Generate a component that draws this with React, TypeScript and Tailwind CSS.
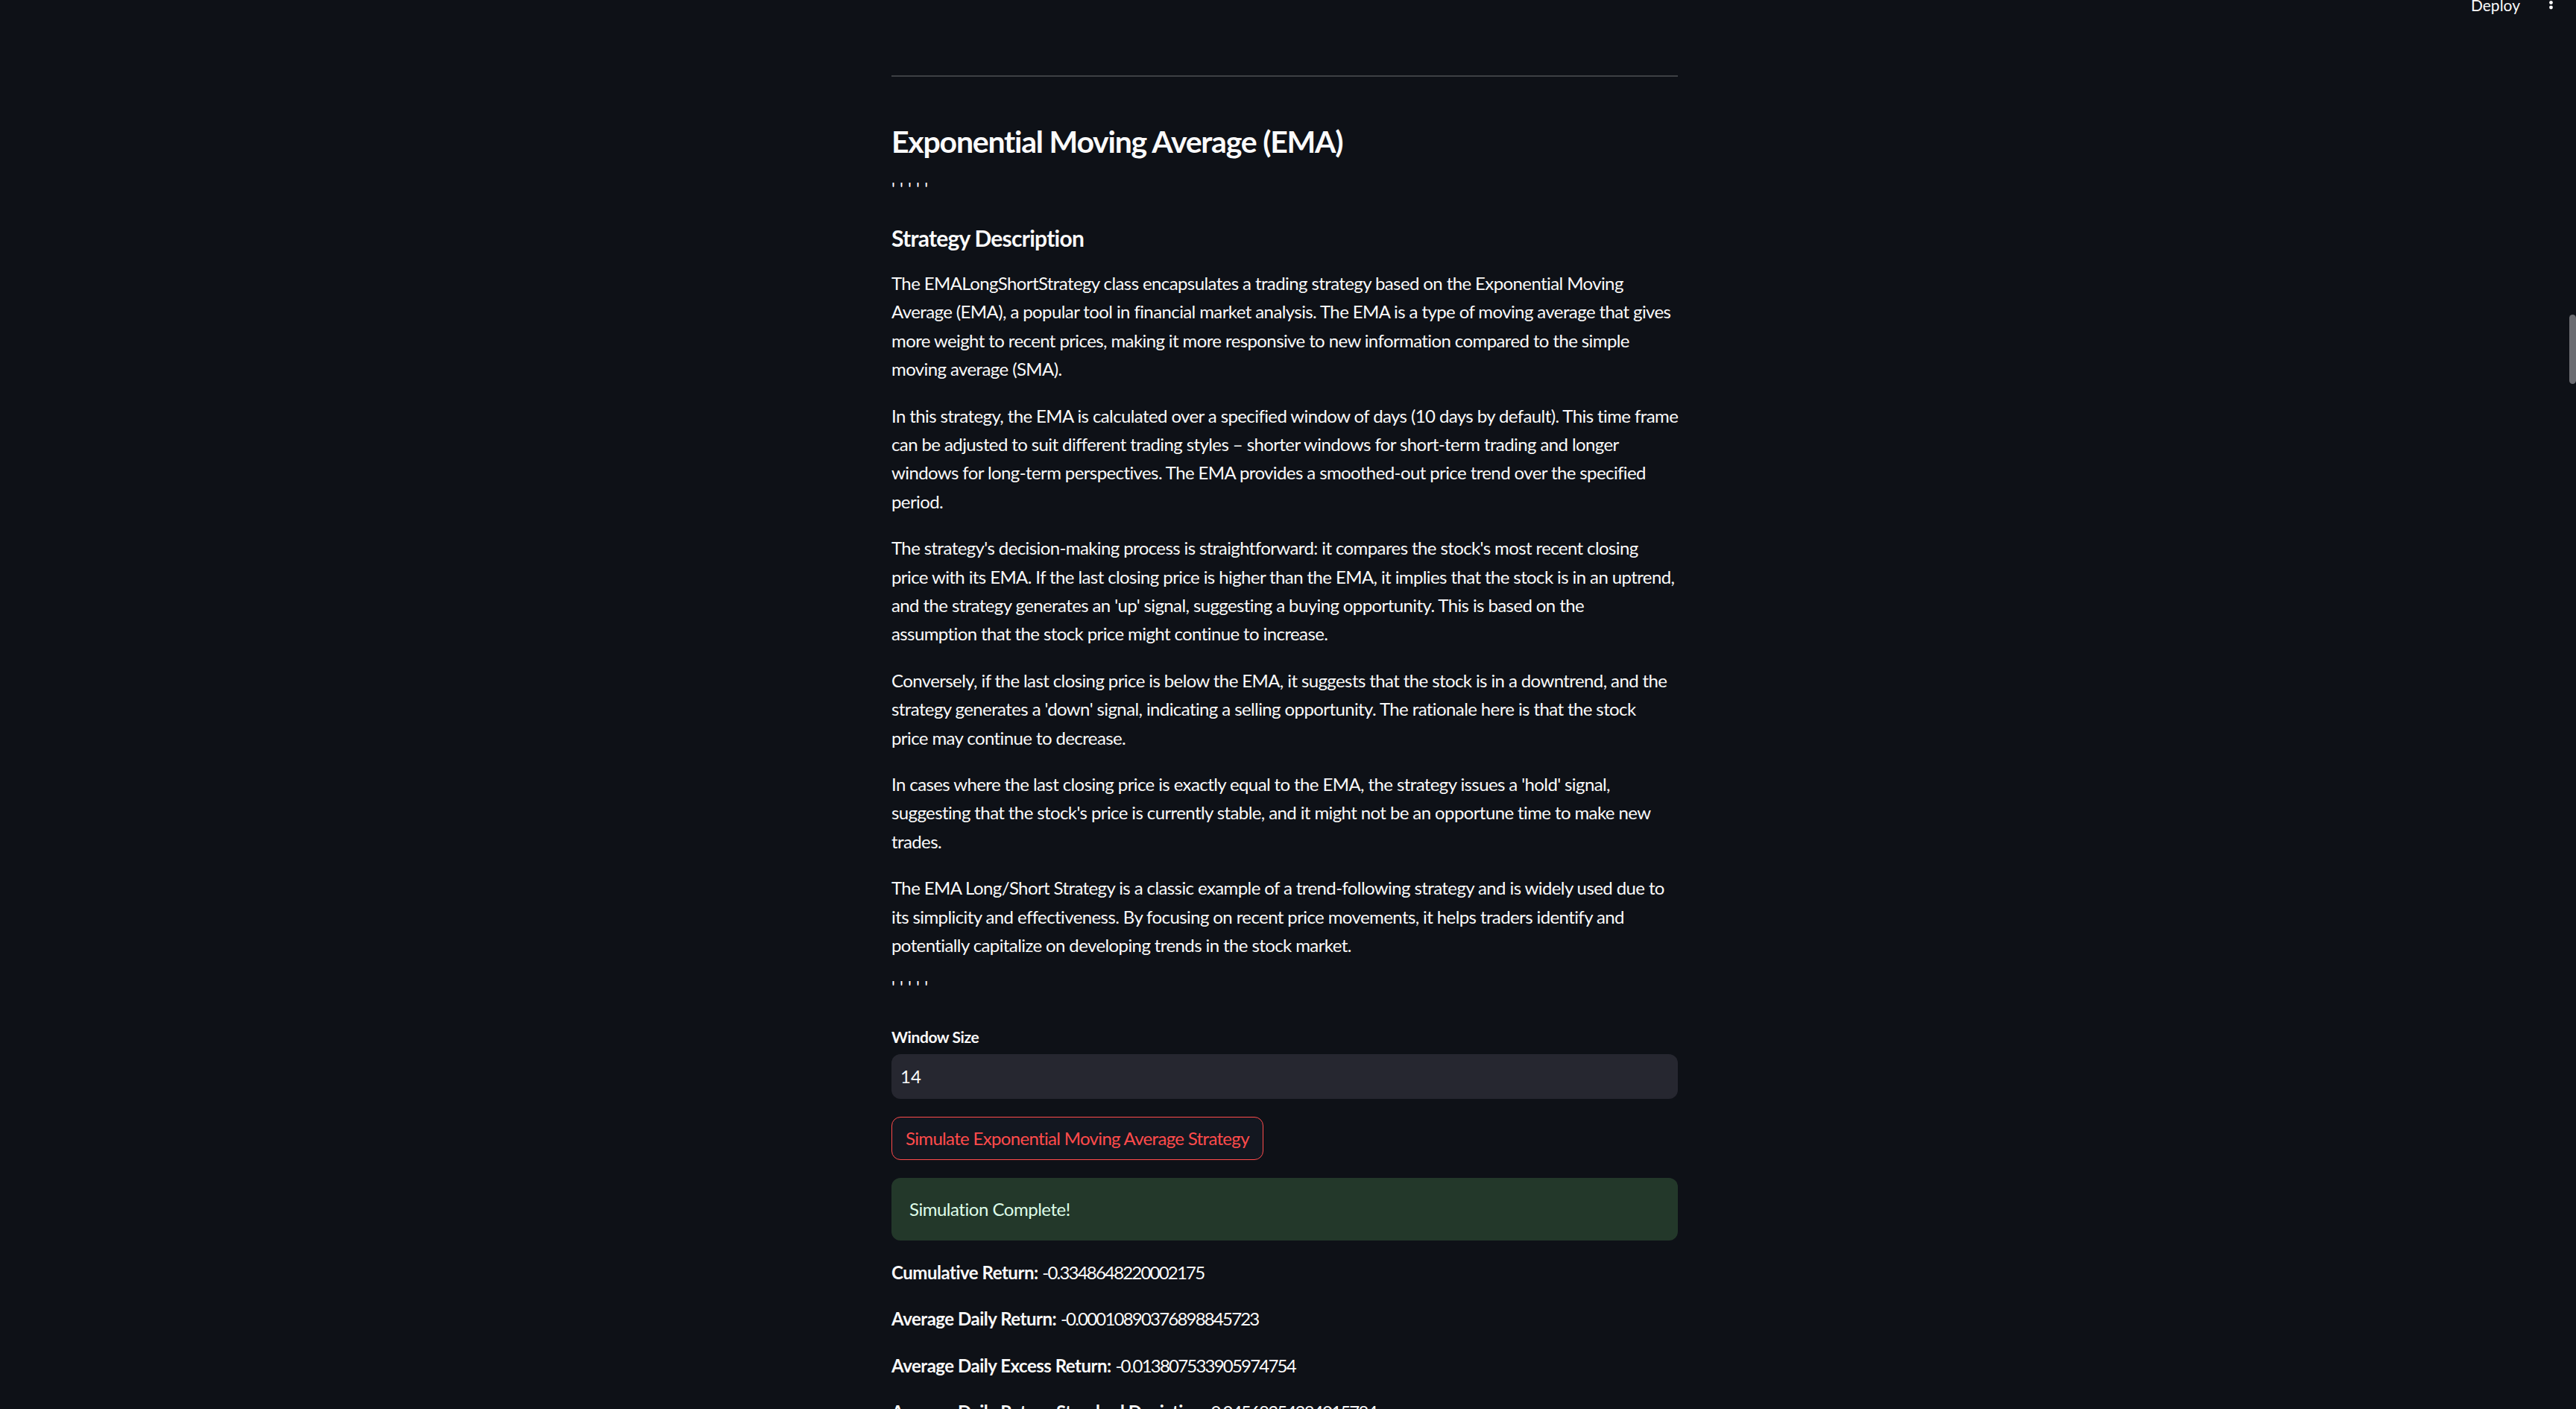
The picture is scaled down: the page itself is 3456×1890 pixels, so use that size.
import * as React from "react";

// Body copy is kept as explicit lines so the wrap matches the reference column.
const paragraphs: string[][] = [
  [
    "The EMALongShortStrategy class encapsulates a trading strategy based on the Exponential Moving",
    "Average (EMA), a popular tool in financial market analysis. The EMA is a type of moving average that gives",
    "more weight to recent prices, making it more responsive to new information compared to the simple",
    "moving average (SMA).",
  ],
  [
    "In this strategy, the EMA is calculated over a specified window of days (10 days by default). This time frame",
    "can be adjusted to suit different trading styles – shorter windows for short-term trading and longer",
    "windows for long-term perspectives. The EMA provides a smoothed-out price trend over the specified",
    "period.",
  ],
  [
    "The strategy's decision-making process is straightforward: it compares the stock's most recent closing",
    "price with its EMA. If the last closing price is higher than the EMA, it implies that the stock is in an uptrend,",
    "and the strategy generates an 'up' signal, suggesting a buying opportunity. This is based on the",
    "assumption that the stock price might continue to increase.",
  ],
  [
    "Conversely, if the last closing price is below the EMA, it suggests that the stock is in a downtrend, and the",
    "strategy generates a 'down' signal, indicating a selling opportunity. The rationale here is that the stock",
    "price may continue to decrease.",
  ],
  [
    "In cases where the last closing price is exactly equal to the EMA, the strategy issues a 'hold' signal,",
    "suggesting that the stock's price is currently stable, and it might not be an opportune time to make new",
    "trades.",
  ],
  [
    "The EMA Long/Short Strategy is a classic example of a trend-following strategy and is widely used due to",
    "its simplicity and effectiveness. By focusing on recent price movements, it helps traders identify and",
    "potentially capitalize on developing trends in the stock market.",
  ],
];

const results = [
  { label: "Cumulative Return:", value: "-0.3348648220002175" },
  { label: "Average Daily Return:", value: "-0.00010890376898845723" },
  { label: "Average Daily Excess Return:", value: "-0.013807533905974754" },
  { label: "Average Daily Return Standard Deviation:", value: "0.04568354284015784" },
];

function Ticks({ className = "" }: { className?: string }) {
  return (
    <p className={`text-[24px] leading-[38.4px] ${className}`}>' ' ' ' '</p>
  );
}

function Header() {
  return (
    <header className="absolute top-0 right-[14px] flex items-start gap-[31px] -mt-[5px]">
      <span className="text-[21px] leading-[24px] text-[#fafafa]">Deploy</span>
      <svg width="21" height="24" viewBox="0 0 21 24" className="mt-[-2px]">
        <circle cx="10.5" cy="4" r="2.4" fill="#fafafa" />
        <circle cx="10.5" cy="10.5" r="2.4" fill="#fafafa" />
        <circle cx="10.5" cy="17" r="2.4" fill="#fafafa" />
      </svg>
    </header>
  );
}

export default function App() {
  return (
    <div className="flex h-screen overflow-hidden bg-[#0e1117] text-[#fafafa] font-['Lato','Noto_Sans',sans-serif]">
      <main className="relative flex-1">
        <Header />
        <div className="mx-auto flex w-[1055px] flex-col">
          <div className="mt-[101px] h-[1.5px] bg-[#3d4044]" />

          <h2 className="mt-[62px] text-[41px] leading-[50px] font-bold tracking-[-0.03em]">
            Exponential Moving Average (EMA)
          </h2>
          <Ticks className="mt-[19px]" />

          <h3 className="mt-[29px] text-[30px] leading-[36px] font-bold tracking-[-0.025em]">
            Strategy Description
          </h3>

          <div className="mt-[24px] flex flex-col gap-[24px] text-[24px] leading-[38.4px] tracking-[-0.025em]">
            {paragraphs.map((lines, i) => (
              <p key={i}>
                {lines.map((line, j) => (
                  <span key={j} className="block whitespace-nowrap">
                    {line}
                  </span>
                ))}
              </p>
            ))}
          </div>
          <Ticks className="mt-[18px]" />

          <label className="mt-[30px] text-[21px] leading-[34px] font-bold tracking-[-0.02em]">
            Window Size
          </label>
          <div className="mt-[6px] flex h-[60px] items-center rounded-[12px] bg-[#262730] px-[12px] text-[24px]">
            14
          </div>

          <div className="mt-[24px]">
            <button className="h-[58px] rounded-[12px] border-[1.5px] border-[#ff4b4b] bg-[#131720] px-[18px] text-[24px] text-[#ff4b4b] tracking-[-0.028em]">
              Simulate Exponential Moving Average Strategy
            </button>
          </div>

          <div className="mt-[24px] flex h-[84px] items-center rounded-[12px] bg-[#23382a] px-[24px] text-[24px] text-[#dffde9] tracking-[-0.02em]">
            Simulation Complete!
          </div>

          <div className="mt-[24px] flex flex-col gap-[24px] text-[24px] leading-[38.4px] tracking-[-0.02em]">
            {results.map((r) => (
              <p key={r.label}>
                <strong className="font-bold">{r.label}</strong>{" "}
                <span className="tracking-[-0.075em]">{r.value}</span>
              </p>
            ))}
          </div>
        </div>
      </main>

      {/* page scrollbar */}
      <div className="w-[9px] shrink-0">
        <div className="mt-[422px] h-[93px] rounded-full bg-[#6b6c71]" />
      </div>
    </div>
  );
}
